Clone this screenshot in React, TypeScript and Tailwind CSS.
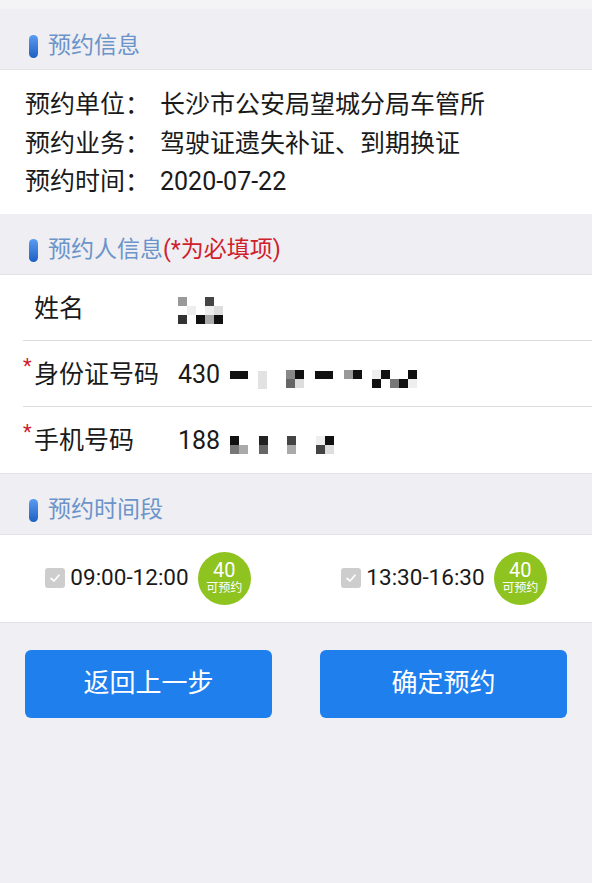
import React from "react";

const font = { fontFamily: "Roboto, 'Noto Sans CJK SC', sans-serif" };

function SectionHeader({ title, note }: { title: string; note?: string }) {
	return (
		<div className="flex items-center h-[61px] pt-[14px] pl-[29px] bg-[#eeeef3] border-b border-[#e2e2e6]">
			<span className="w-[9px] h-[23px] rounded-full bg-gradient-to-b from-[#5a9cf0] to-[#1d5fc4] mr-[10px]" />
			<span className="text-[23px] text-[#6b94c9]">{title}</span>
			{note && <span className="text-[23px] text-[#d0202c]">{note}</span>}
		</div>
	);
}

// a block of blurred pixels standing in for hidden personal data
function Pixels({ cols, cells }: { cols: string; cells: string[] }) {
	return (
		<span className={`grid ${cols} auto-rows-[9px]`}>
			{cells.map((c, i) => (
				<span key={i} className="block w-[9px] h-[9px]" style={{ background: c }} />
			))}
		</span>
	);
}

function Row({
	label,
	required,
	children,
	last,
}: {
	label: string;
	required?: boolean;
	children: React.ReactNode;
	last?: boolean;
}) {
	return (
		<div className={`flex items-center h-[66px] pt-[3px] ml-[23px] ${last ? "" : "border-b border-[#dcdcdc]"}`}>
			<div className="w-[155px] flex items-center text-[25px] text-[#1a1a1a]">
				<span className="w-[11px] self-center -mt-[18px] text-[#d0202c] text-[20px] leading-none">
					{required ? "*" : ""}
				</span>
				{label}
			</div>
			<div className="flex items-center text-[25px] text-[#1a1a1a]">{children}</div>
		</div>
	);
}

function Slot({ time }: { time: string }) {
	return (
		<div className="flex items-center justify-center">
			<span className="w-[20px] h-[20px] rounded-[3px] bg-[#cdcdcd] flex items-center justify-center mr-[5px]">
				<svg width="14" height="14" viewBox="0 0 14 14" fill="none">
					<path d="M3 7.3 L6 10 L11 4.2" stroke="white" strokeWidth="1.7" strokeLinecap="round" strokeLinejoin="round" />
				</svg>
			</span>
			<span className="text-[22.5px] text-[#1a1a1a]">{time}</span>
			<div className="ml-[9px] w-[53px] h-[53px] rounded-full bg-[#8fc31f] flex flex-col items-center justify-center text-white">
				<span className="text-[20px] leading-[21px]">40</span>
				<span className="text-[12px] leading-[15px]">可预约</span>
			</div>
		</div>
	);
}

const w = "transparent";

export default function App() {
	return (
		<div className="w-[592px] h-[883px] bg-[#efeff4]" style={font}>
			<div className="h-[9px] bg-[#f4f4f6]" />
			<SectionHeader title="预约信息" />
			<div className="bg-white px-[25px] pt-[16px] pb-[12px] text-[25px] text-[#1a1a1a] leading-[38.5px]">
				<div className="flex">
					<span className="w-[135px]">预约单位：</span>
					<span>长沙市公安局望城分局车管所</span>
				</div>
				<div className="flex">
					<span className="w-[135px]">预约业务：</span>
					<span>驾驶证遗失补证、到期换证</span>
				</div>
				<div className="flex">
					<span className="w-[135px]">预约时间：</span>
					<span>2020-07-22</span>
				</div>
			</div>
			<SectionHeader title="预约人信息" note="(*为必填项)" />
			<div className="bg-white border-b border-[#e2e2e6]">
				<Row label="姓名">
					<span className="mt-[4px]">
						<Pixels
							cols="grid-cols-6"
							cells={[
								"#999", w, w, "#444", w, w,
								w, "#eee", w, "#eee", "#ddd", w,
								"#333", w, "#111", "#aaa", "#111", w,
							]}
						/>
					</span>
				</Row>
				<Row label="身份证号码" required>
					<span>430</span>
					<span className="w-[18px] h-[8px] bg-[#111] ml-[10px]" />
					<span className="w-[9px] h-[18px] bg-[#e2e2e2] ml-[10px] mt-[10px]" />
					<span className="ml-[19px] mt-[8px]">
						<Pixels cols="grid-cols-2" cells={["#888", "#111", "#666", "#ddd"]} />
					</span>
					<span className="w-[18px] h-[8px] bg-[#111] ml-[11px]" />
					<span className="ml-[11px]">
						<Pixels cols="grid-cols-2" cells={["#999", "#111"]} />
					</span>
					<span className="ml-[10px] mt-[8px]">
						<Pixels
							cols="grid-cols-5"
							cells={["#eee", "#111", w, w, "#111", "#111", w, "#777", "#111", "#eee"]}
						/>
					</span>
				</Row>
				<Row label="手机号码" required last>
					<span>188</span>
					<span className="ml-[10px] mt-[8px]">
						<Pixels cols="grid-cols-2" cells={["#111", w, "#777", "#aaa"]} />
					</span>
					<span className="ml-[11px] mt-[8px]">
						<Pixels cols="grid-cols-1" cells={["#222", "#666"]} />
					</span>
					<span className="ml-[19px] mt-[8px]">
						<Pixels cols="grid-cols-1" cells={["#444", "#aaa"]} />
					</span>
					<span className="ml-[20px] mt-[8px]">
						<Pixels cols="grid-cols-2" cells={["#eee", "#111", "#444", "#ddd"]} />
					</span>
				</Row>
			</div>
			<SectionHeader title="预约时间段" />
			<div className="bg-white h-[88px] grid grid-cols-2 items-center border-b border-[#e2e2e6]">
				<Slot time="09:00-12:00" />
				<Slot time="13:30-16:30" />
			</div>
			<div className="flex justify-between px-[25px] pt-[27px]">
				<button className="w-[247px] h-[68px] rounded-[6px] bg-[#1f7fed] text-white text-[26px]">返回上一步</button>
				<button className="w-[247px] h-[68px] rounded-[6px] bg-[#1f7fed] text-white text-[26px]">确定预约</button>
			</div>
		</div>
	);
}
